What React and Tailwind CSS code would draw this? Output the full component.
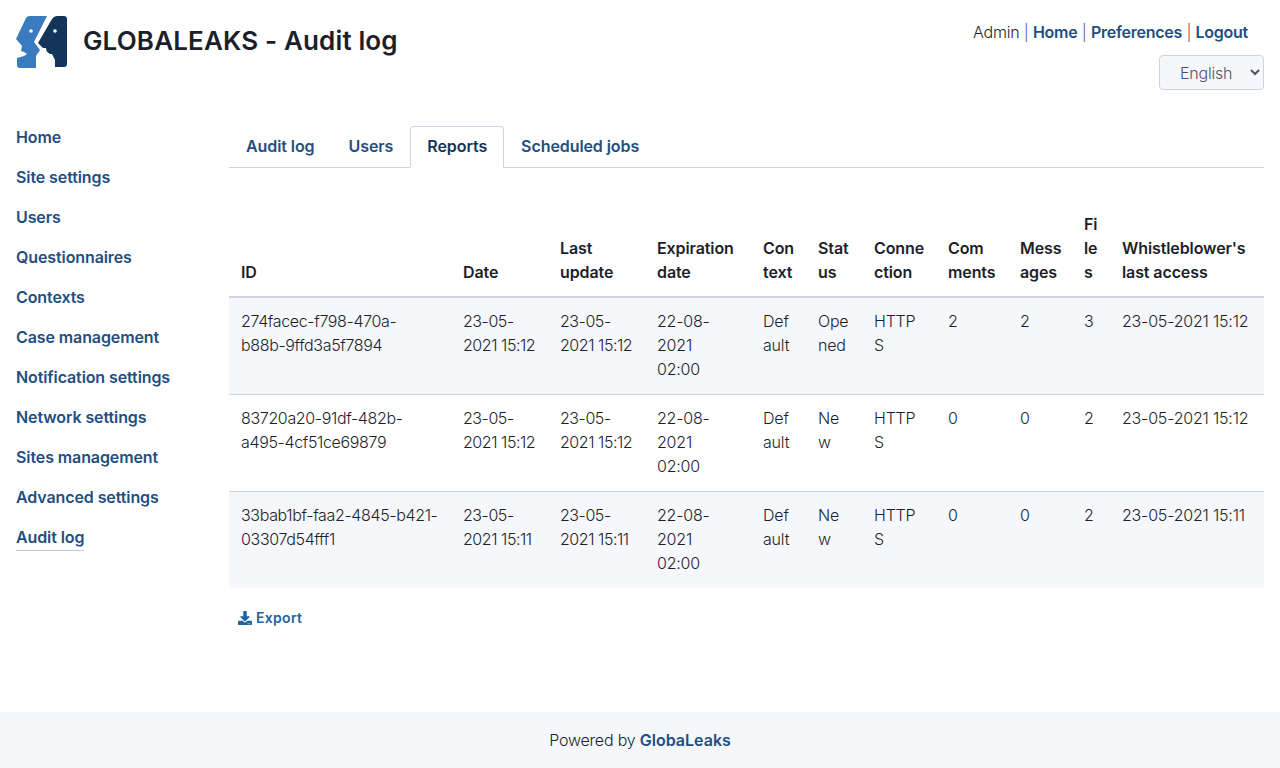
const navItems = ['Home', 'Site settings', 'Users', 'Questionnaires', 'Contexts', 'Case management', 'Notification settings', 'Network settings', 'Sites management', 'Advanced settings', 'Audit log']

const tabs = ['Audit log', 'Users', 'Reports', 'Scheduled jobs']

const rows = [
  { id: '274facec-f798-470a-b88b-9ffd3a5f7894', date: '23-05-2021 15:12', update: '23-05-2021 15:12', status: 'Opened', comments: 2, messages: 2, files: 3, last: '23-05-2021 15:12' },
  { id: '83720a20-91df-482b-a495-4cf51ce69879', date: '23-05-2021 15:12', update: '23-05-2021 15:12', status: 'New', comments: 0, messages: 0, files: 2, last: '23-05-2021 15:12' },
  { id: '33bab1bf-faa2-4845-b421-03307d54fff1', date: '23-05-2021 15:11', update: '23-05-2021 15:11', status: 'New', comments: 0, messages: 0, files: 2, last: '23-05-2021 15:11' },
]

function Logo() {
  return (
    <svg viewBox="0 0 52 52" className="w-[52px] h-[52px] shrink-0">
      <path d="M10 2 Q11 0 14 0 L31 0 L18 26 L24 34 L20 40 L20 52 L4 52 Q1 52 1 49 L1 42 L8 40 L11 38 L8 36 L5 35 L6 30 L0 23 Z" fill="#3a7bbf" />
      <path d="M36 3 Q38 0 41 0 L48 0 Q51 0 51 3 L51 48 Q51 51 48 51 L36 51 L36 40 L28 33 L22 27 Z" fill="#123559" />
      <path d="M20 52 L20 44 L26 40 L27 32 L30 32 L31 38 L36 38 L39 44 L39 52 Z" fill="#ffffff" />
      <circle cx="15" cy="15" r="1.8" fill="#ffffff" />
      <circle cx="39" cy="15" r="1.8" fill="#ffffff" />
    </svg>
  )
}

export default function App() {
  return (
    <div className="min-h-[768px] flex flex-col bg-white text-[#1c1f2b] text-base leading-6 font-['Inter',sans-serif] font-[350] tracking-[-0.2px]">
      {/* Header */}
      <header className="flex justify-between px-4 pt-4 h-[110px]">
        <div className="flex items-start gap-[15px]">
          <Logo />
          <h1 className="text-[26px] leading-[50px] font-semibold tracking-[0.15px]">GLOBALEAKS - Audit log</h1>
        </div>
        <div className="flex flex-col items-end">
          <div className="pr-4 pt-1 pb-[11px]">
            Admin <span className="text-[#5a6472]">|</span> <a className="font-semibold tracking-[-0.25px] text-[#1f4e7f]">Home</a> <span className="text-[#5a6472]">|</span> <a className="font-semibold tracking-[-0.25px] text-[#1f4e7f]">Preferences</a> <span className="text-[#5a6472]">|</span> <a className="font-semibold tracking-[-0.25px] text-[#1f4e7f]">Logout</a>
          </div>
          <select className="w-[105px] h-[35px] pl-4 bg-[#f5f7fb] border border-[#cbd5e1] rounded text-[#4b5563]">
            <option>English</option>
          </select>
        </div>
      </header>

      <div className="flex flex-1 px-4">
        {/* Sidebar */}
        <nav className="w-[213px] shrink-0 flex flex-col items-start pt-[7px]">
          {navItems.map(item => (
            <a key={item} className={`h-10 flex items-center font-semibold tracking-[-0.1px] text-[#1f4e7f] ${item === 'Audit log' ? 'relative' : ''}`}>
              {item}
              {item === 'Audit log' && <span className="absolute left-0 right-0 bottom-[6px] h-px bg-[#b9cde0]" />}
            </a>
          ))}
        </nav>

        {/* Main */}
        <main className="flex-1 min-w-0 pt-4">
          <div className="flex border-b border-[#cbd5e1] h-[42px]">
            {tabs.map(tab => (
              <a key={tab} className={`h-[42px] font-semibold tracking-[-0.08px] rounded-t ${tab === 'Reports' ? 'pt-[7px] px-4 bg-white border border-[#cbd5e1] border-b-white text-[#123559]' : 'pt-2 px-[17px] text-[#1f4e7f]'}`}>
                {tab}
              </a>
            ))}
          </div>

          <table className="w-full table-fixed border-collapse mt-[32px]">
            <colgroup>
              <col className="w-[222px]" />
              <col className="w-[97px]" />
              <col className="w-[97px]" />
              <col className="w-[106px]" />
              <col className="w-[55px]" />
              <col className="w-[56px]" />
              <col className="w-[74px]" />
              <col className="w-[72px]" />
              <col className="w-[64px]" />
              <col className="w-[38px]" />
              <col className="w-[154px]" />
            </colgroup>
            <thead>
              <tr className="border-b-2 border-[#cbd5e1] align-bottom text-left [&>th]:p-3 [&>th]:font-semibold [&>th]:tracking-[-0.1px] [&>th]:[overflow-wrap:anywhere]">
                <th>ID</th>
                <th>Date</th>
                <th>Last update</th>
                <th>Expiration date</th>
                <th className="pr-2!">Context</th>
                <th>Status</th>
                <th className="pr-1!">Connection</th>
                <th>Comments</th>
                <th className="pr-2!">Messages</th>
                <th>Files</th>
                <th className="pr-0!">Whistleblower's last access</th>
              </tr>
            </thead>
            <tbody>
              {rows.map(row => (
                <tr key={row.id} className="border-b border-[#cbd5e1] last:border-b-0 odd:bg-[#f5f7fb] align-top [&>td]:px-3 [&>td]:pt-[11px] [&>td]:pb-[13px]">
                  <td className="tracking-[-0.35px]">{row.id}</td>
                  <td className="tracking-[-0.45px]">{row.date}</td>
                  <td className="tracking-[-0.45px]">{row.update}</td>
                  <td>22-08-2021 02:00</td>
                  <td className="break-all">Default</td>
                  <td className="break-all">{row.status}</td>
                  <td className="break-all">HTTPS</td>
                  <td>{row.comments}</td>
                  <td>{row.messages}</td>
                  <td>{row.files}</td>
                  <td>{row.last}</td>
                </tr>
              ))}
            </tbody>
          </table>

          <a className="inline-flex items-center gap-1 mt-[20px] ml-[9px] text-sm font-semibold tracking-[0.3px] text-[#22639f]">
            <svg viewBox="0 0 512 512" className="w-[14px] h-[14px] fill-current">
              <path d="M216 0h80c13.300 0 24 10.700 24 24v168h87.700c17.800 0 26.700 21.500 14.100 34.100L269.700 378.300c-7.500 7.500-19.800 7.500-27.300 0L90.100 226.100c-12.600-12.600-3.700-34.100 14.100-34.100H192V24c0-13.300 10.700-24 24-24zm296 376v112c0 13.300-10.700 24-24 24H24c-13.300 0-24-10.700-24-24V376c0-13.300 10.700-24 24-24h146.700l49 49c20.100 20.100 52.500 20.100 72.600 0l49-49H488c13.300 0 24 10.700 24 24zm-124 88c0-11-9-20-20-20s-20 9-20 20 9 20 20 20 20-9 20-20zm64 0c0-11-9-20-20-20s-20 9-20 20 9 20 20 20 20-9 20-20z" />
            </svg>
            Export
          </a>
        </main>
      </div>

      {/* Footer */}
      <footer className="h-[56px] bg-[#f5f7fb] flex items-center justify-center pb-px">
        <span>Powered by <a className="font-semibold tracking-normal text-[#1f4e7f]">GlobaLeaks</a></span>
      </footer>
    </div>
  )
}
